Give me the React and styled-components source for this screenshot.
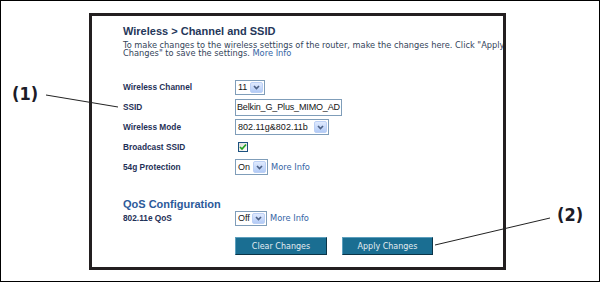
import React from 'react';
import styled, { createGlobalStyle } from 'styled-components';

const GlobalStyle = createGlobalStyle`
	html,
	body {
		margin: 0;
		padding: 0;
		background: #fff;
	}
	body {
		font-family: 'DejaVu Sans', Verdana, sans-serif;
	}
`;

const Sheet = styled.div`
	position: relative;
	width: 600px;
	height: 282px;
	box-sizing: border-box;
	border: 1px solid #000;
	display: flex;
	align-items: flex-start;
	background: #fff;
`;

const LeftGutter = styled.div`
	flex: none;
	width: 88px;
	box-sizing: border-box;
	padding: 84px 0 0 11px;
`;

const RightGutter = styled.div`
	flex: 1;
	box-sizing: border-box;
	padding: 205px 0 0 51px;
`;

const Callout = styled.span`
	display: block;
	font-family: 'DejaVu Sans Condensed', 'DejaVu Sans', sans-serif;
	font-stretch: condensed;
	font-weight: bold;
	font-size: 18px;
	line-height: 18px;
	color: #1c1c28;
`;

const Leaders = styled.svg`
	position: absolute;
	left: -1px;
	top: -1px;
	pointer-events: none;
`;

const Frame = styled.div`
	flex: none;
	width: 417px;
	height: 257px;
	margin-top: 12px;
	box-sizing: border-box;
	border: 3px solid #231f20;
	overflow: hidden;
	padding: 9px 0 0 31px;
`;

const Title = styled.h1`
	margin: 0;
	font: bold 11px/13px 'Liberation Sans', Arial, sans-serif;
	color: #25375a;
	white-space: nowrap;
`;

const Intro = styled.p`
	margin: 3px 0 0;
	font-size: 8.25px;
	line-height: 8px;
	color: #34455a;
	white-space: nowrap;
`;

const Link = styled.span`
	color: #3565a5;
	margin-left: ${(p) => p.$gap || 0}px;
	font-size: 8.3px;
`;

const Form = styled.div`
	margin-top: 20px;
	display: flex;
	flex-direction: column;
`;

const Row = styled.div`
	display: grid;
	grid-template-columns: 112px auto;
	align-items: center;
	height: ${(p) => p.$h || 20}px;
`;

const Label = styled.span`
	font: bold 8.3px 'Liberation Sans', Arial, sans-serif;
	color: #1f3157;
	white-space: nowrap;
`;

const Control = styled.div`
	display: flex;
	align-items: center;
`;

const SelectBox = styled.div`
	display: flex;
	align-items: stretch;
	width: ${(p) => p.$w}px;
	height: ${(p) => p.$h}px;
	box-sizing: border-box;
	border: 1px solid #7f9db9;
	background: #fff;
	padding: 1px;
`;

const Value = styled.span`
	flex: 1;
	display: flex;
	align-items: center;
	padding-left: 1px;
	font: 9px 'Liberation Sans', Arial, sans-serif;
	color: #151515;
	white-space: nowrap;
	overflow: hidden;
`;

const ArrowBox = styled.span`
	flex: none;
	width: 13px;
	box-sizing: border-box;
	border: 1px solid #bcd0f5;
	border-radius: 2px;
	background: linear-gradient(#e0eafe, #b3cbf6);
	display: flex;
	align-items: center;
	justify-content: center;
`;

const TextInput = styled.div`
	width: 107px;
	height: 17px;
	box-sizing: border-box;
	border: 1px solid #7f9db9;
	background: #fff;
	padding-left: 1px;
	display: flex;
	align-items: center;
	font: 9px 'Liberation Sans', Arial, sans-serif;
	letter-spacing: -0.15px;
	color: #151515;
	white-space: nowrap;
	overflow: hidden;
`;

const CheckBox = styled.span`
	width: 10px;
	height: 10px;
	margin-left: 3px;
	box-sizing: border-box;
	border: 1px solid #1c5180;
	background: linear-gradient(135deg, #dcdcd7, #fff);
	display: flex;
	align-items: center;
	justify-content: center;
`;

const Section = styled.h2`
	margin: 22px 0 0;
	font: bold 11px/11px 'Liberation Sans', Arial, sans-serif;
	color: #2c5a9a;
`;

const Buttons = styled.div`
	margin: 11px 0 0 112px;
	display: flex;
	gap: 15px;
`;

const Button = styled.button`
	width: ${(p) => p.$w}px;
	height: 18px;
	padding: 0;
	background: #1a6e92;
	border: 1px solid;
	border-color: #5d9fbd #0b3447 #0b3447 #5d9fbd;
	color: #e3ecf1;
	font: 8px 'DejaVu Sans', Verdana, sans-serif;
`;

function Select({ value, w, h }) {
	return (
		<SelectBox $w={w} $h={h}>
			<Value>{value}</Value>
			<ArrowBox>
				<svg width="7" height="5" viewBox="0 0 7 5">
					<path d="M1 1 L3.5 3.6 L6 1" fill="none" stroke="#4d6185" strokeWidth="1.6" />
				</svg>
			</ArrowBox>
		</SelectBox>
	);
}

export default function App() {
	return (
		<>
			<GlobalStyle />
			<Sheet>
				<LeftGutter>
					<Callout>(1)</Callout>
				</LeftGutter>
				<Frame>
					<Title>Wireless &gt; Channel and SSID</Title>
					<Intro>
						To make changes to the wireless settings of the router, make the changes here. Click "Apply
						<br />
						Changes" to save the settings. <Link>More Info</Link>
					</Intro>
					<Form>
						<Row>
							<Label>Wireless Channel</Label>
							<Control>
								<Select value="11" w={30} h={15} />
							</Control>
						</Row>
						<Row>
							<Label>SSID</Label>
							<Control>
								<TextInput>Belkin_G_Plus_MIMO_AD</TextInput>
							</Control>
						</Row>
						<Row>
							<Label>Wireless Mode</Label>
							<Control>
								<Select value="802.11g&802.11b" w={94} h={16} />
							</Control>
						</Row>
						<Row>
							<Label>Broadcast SSID</Label>
							<Control>
								<CheckBox>
									<svg width="8" height="8" viewBox="0 0 8 8">
										<path d="M1 4 L3 6 L7 1.5" fill="none" stroke="#21a121" strokeWidth="1.7" />
									</svg>
								</CheckBox>
							</Control>
						</Row>
						<Row>
							<Label>54g Protection</Label>
							<Control>
								<Select value="On" w={33} h={16} />
								<Link $gap={3}>More Info</Link>
							</Control>
						</Row>
					</Form>
					<Section>QoS Configuration</Section>
					<Row $h={16}>
						<Label>802.11e QoS</Label>
						<Control>
							<Select value="Off" w={32} h={15} />
							<Link $gap={3}>More Info</Link>
						</Control>
					</Row>
					<Buttons>
						<Button $w={92}>Clear Changes</Button>
						<Button $w={91}>Apply Changes</Button>
					</Buttons>
				</Frame>
				<RightGutter>
					<Callout>(2)</Callout>
				</RightGutter>
				<Leaders width="600" height="282">
					<line x1="46" y1="95" x2="118" y2="107" stroke="#222" strokeWidth="1" />
					<line x1="550" y1="218" x2="435" y2="245" stroke="#222" strokeWidth="1" />
				</Leaders>
			</Sheet>
		</>
	);
}
